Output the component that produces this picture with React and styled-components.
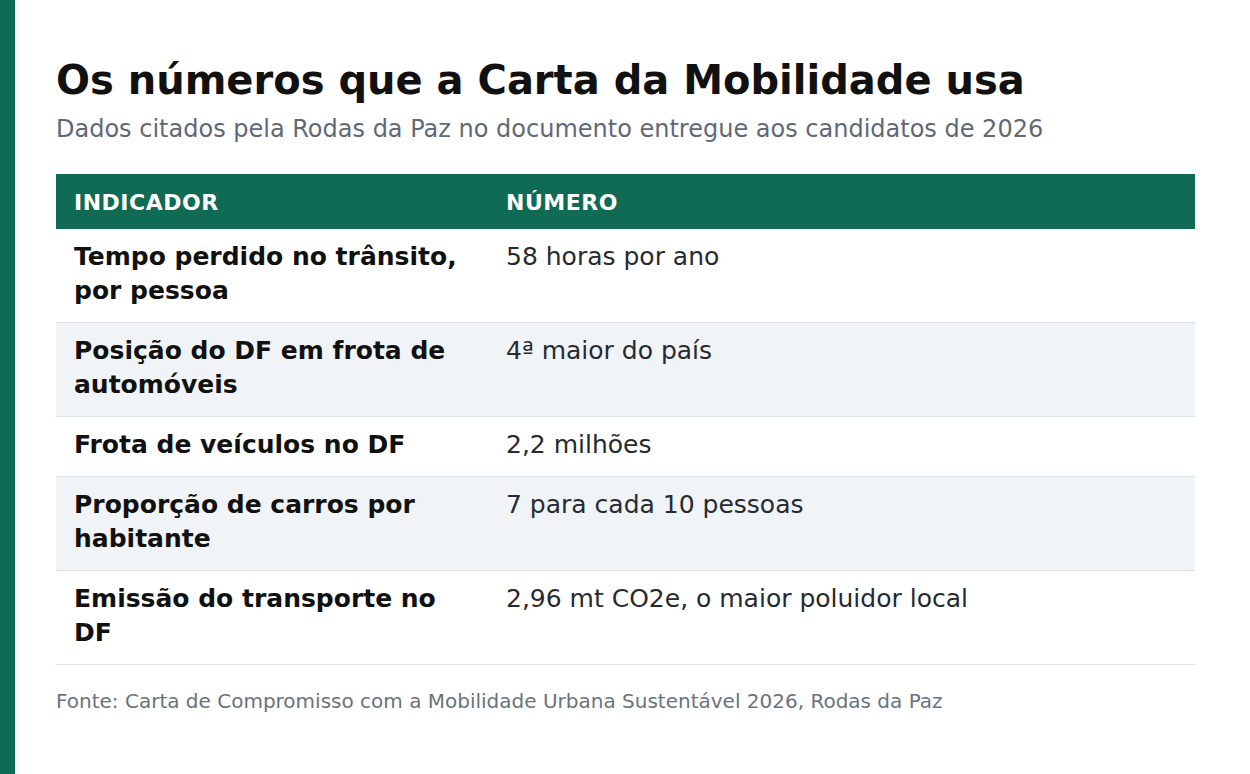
import React from 'react'
import styled, { createGlobalStyle } from 'styled-components'

const rows = [
    { label: 'Tempo perdido no trânsito, por pessoa', value: '58 horas por ano' },
    { label: 'Posição do DF em frota de automóveis', value: '4ª maior do país' },
    { label: 'Frota de veículos no DF', value: '2,2 milhões' },
    { label: 'Proporção de carros por habitante', value: '7 para cada 10 pessoas' },
    { label: 'Emissão do transporte no DF', value: '2,96 mt CO2e, o maior poluidor local' },
]

export default function App() {
    return (
        <>
            <GlobalStyle />
            <Page>
                <Title>Os números que a Carta da Mobilidade usa</Title>
                <Subtitle>Dados citados pela Rodas da Paz no documento entregue aos candidatos de 2026</Subtitle>

                <Table>
                    <thead>
                        <tr>
                            <HeadCell $width="432px">Indicador</HeadCell>
                            <HeadCell>Número</HeadCell>
                        </tr>
                    </thead>
                    <tbody>
                        {rows.map((row, i) => (
                            <Row key={row.label} $striped={i % 2 === 1}>
                                <LabelCell>{row.label}</LabelCell>
                                <ValueCell>{row.value}</ValueCell>
                            </Row>
                        ))}
                    </tbody>
                </Table>

                <Source>Fonte: Carta de Compromisso com a Mobilidade Urbana Sustentável 2026, Rodas da Paz</Source>
            </Page>
        </>
    )
};

// Styled Components
const GlobalStyle = createGlobalStyle`
html, body {
    margin: 0;
    padding: 0;
    background: #ffffff;
}
body {
    font-family: "DejaVu Sans", "Noto Sans", sans-serif;
}
`

const Page = styled.div`
box-sizing: border-box;
min-height: 774px;
border-left: 15px solid #0f6b53;
padding: 56px 55px 40px 41px;
background: #ffffff;
`

const Title = styled.h1`
margin: 0;
font-size: 40px;
line-height: 48px;
font-weight: 700;
color: #111111;
`

const Subtitle = styled.p`
margin: 9px 0 0;
font-size: 24px;
line-height: 32px;
color: #5f6975;
`

const Table = styled.table`
margin-top: 29px;
width: 100%;
table-layout: fixed;
border-collapse: collapse;
border-spacing: 0;
`

const HeadCell = styled.th`
box-sizing: border-box;
width: ${p => p.$width || 'auto'};
background: #0f6b53;
color: #ffffff;
text-align: left;
text-transform: uppercase;
font-size: 22px;
font-weight: 700;
letter-spacing: 0.5px;
line-height: 27px;
padding: 15px 18px 13px;
`

const Row = styled.tr`
background: ${p => (p.$striped ? '#f1f4f7' : '#ffffff')};
border-bottom: 1px solid #dde3e8;
`

const LabelCell = styled.td`
vertical-align: top;
padding: 11px 18px 14px;
font-size: 25px;
line-height: 34px;
font-weight: 700;
color: #111111;
`

const ValueCell = styled.td`
vertical-align: top;
padding: 11px 18px 14px;
font-size: 25px;
line-height: 34px;
color: #262b31;
`

const Source = styled.p`
margin: 22px 0 0;
font-size: 20px;
line-height: 28px;
color: #6a737d;
`
